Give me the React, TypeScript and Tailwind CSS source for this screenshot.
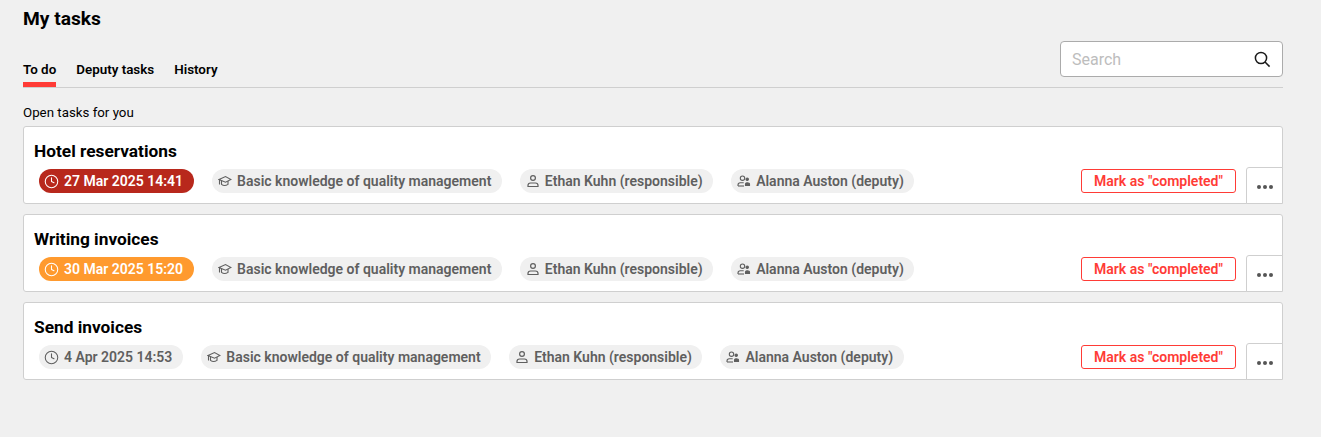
import { Clock } from "lucide-react";

const tasks = [
  { title: "Hotel reservations", due: "27 Mar 2025 14:41", tone: "bg-[#b8281c] text-white" },
  { title: "Writing invoices", due: "30 Mar 2025 15:20", tone: "bg-[#ff9a2e] text-white" },
  { title: "Send invoices", due: "4 Apr 2025 14:53", tone: "bg-[#f0f0f0] text-[#5f5f5f]" },
];

// hand drawn: lucide has no close match for these small outline glyphs
const SearchIcon = () => (
  <svg width="17" height="17" viewBox="0 0 17 17" fill="none" stroke="#1a1a1a" strokeWidth="1.5">
    <circle cx="7" cy="7" r="5.6" />
    <path d="M11 11l4.6 4.6" />
  </svg>
);

const CapIcon = () => (
  <svg width="14" height="14" viewBox="0 0 14 14" fill="none" stroke="currentColor" strokeWidth="1.1">
    <path d="M1 5.5 7.5 2.5l5.5 3L7.5 8.2z" />
    <path d="M3.5 7v3.4c1.6 1.2 4.6 1.2 6.5 0V7" />
    <path d="M1.5 5.5V10.5" />
  </svg>
);

const PersonIcon = () => (
  <svg width="14" height="14" viewBox="0 0 14 14" fill="none" stroke="currentColor" strokeWidth="1.2">
    <circle cx="7" cy="4" r="2.4" />
    <path d="M2 12.5v-1.2C2 9.8 3.2 9 4.5 9h5c1.3 0 2.5.8 2.5 2.3v1.2z" />
  </svg>
);

const DeputyIcon = () => (
  <svg width="14" height="14" viewBox="0 0 14 14" fill="none" stroke="currentColor" strokeWidth="1.1">
    <circle cx="5.5" cy="4.2" r="2.2" />
    <path d="M1 12v-1c0-1.4 1-2.2 2.3-2.2h3.4" />
    <path d="M1 12h6" />
    <circle cx="10.2" cy="5.2" r="1.2" fill="currentColor" />
    <path d="M8.5 11.5V10c0-.8.7-1.3 1.6-1.3s2.4.5 2.4 1.3v1.5z" fill="currentColor" />
  </svg>
);

const Chip = ({ icon, label }: { icon: React.ReactNode; label: string }) => (
  <span className="flex h-6 items-center gap-[5px] rounded-full bg-[#f0f0f0] pr-[10.5px] pl-[6px] text-[14px] font-semibold text-[#5f5f5f]">
    {icon}
    {label}
  </span>
);

const App = () => {
  return (
    <div className="h-[437px] overflow-hidden bg-[#f0f0f0] pl-[23px] pr-[38px] font-['Roboto',sans-serif] text-black">
      <h1 className="pt-[7px] text-[19.2px] leading-[24px] font-bold">My tasks</h1>

      {/* Tabs + search */}
      <div className="mt-[1px] flex h-[56px] items-end justify-between border-b border-[#cfcfcf]">
        <nav className="flex gap-5">
          <a className="border-b-[5px] border-[#ff3b36] pb-[3px] text-[13.4px] leading-[18px] font-semibold">To do</a>
          <a className="pb-[8px] text-[13.4px] leading-[18px] font-semibold">Deputy tasks</a>
          <a className="pb-[8px] text-[13.4px] leading-[18px] font-semibold">History</a>
        </nav>
        <div className="mb-[10px] flex h-9 w-[223px] items-center justify-between rounded-[4px] border border-[#ababab] bg-white pr-[11px] pl-[11px]">
          <span className="pt-[2px] text-[16px] text-[#bdbdbd]">Search</span>
          <SearchIcon />
        </div>
      </div>

      <p className="mt-[16px] text-[13.3px] leading-[18px]">Open tasks for you</p>

      <ul className="mt-[4px] flex flex-col gap-[10px]">
        {tasks.map((task) => (
          <li
            key={task.title}
            className="relative h-[78px] rounded-[3px] border border-[#cfcfcf] bg-white pt-[13px] pl-[10px]"
          >
            <h2 className="text-[17.3px] leading-[22px] font-bold">{task.title}</h2>
            <div className="mt-[7px] flex items-center gap-[18px] pl-[5px]">
              <span className={`flex h-6 items-center gap-[5px] rounded-full pr-[11px] pl-[5px] text-[14px] font-semibold ${task.tone}`}>
                <Clock size={15} strokeWidth={1.7} />
                {task.due}
              </span>
              <Chip icon={<CapIcon />} label="Basic knowledge of quality management" />
              <Chip icon={<PersonIcon />} label="Ethan Kuhn (responsible)" />
              <Chip icon={<DeputyIcon />} label="Alanna Auston (deputy)" />
              <button className="mr-[46px] ml-auto h-6 w-[155px] rounded-[3px] border border-[#ff3b36] text-[14px] font-semibold text-[#ff3b36]">
                Mark as "completed"
              </button>
            </div>
            <button className="absolute right-[-1px] bottom-[-1px] flex h-[37px] w-[37px] items-center justify-center gap-[2px] rounded-tl-[3px] border border-[#cfcfcf] bg-white pt-[2px]">
              <span className="h-1 w-1 rounded-full bg-[#555]" />
              <span className="h-1 w-1 rounded-full bg-[#555]" />
              <span className="h-1 w-1 rounded-full bg-[#555]" />
            </button>
          </li>
        ))}
      </ul>
    </div>
  );
};

export default App;
